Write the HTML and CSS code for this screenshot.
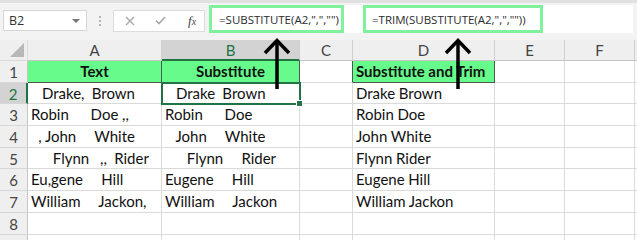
FILE: index.html
```html
<!DOCTYPE html>
<html lang="en">
<head>
    <meta charset="UTF-8">
    <meta name="viewport" content="width=device-width, initial-scale=1.0">
    <title>SUBSTITUTE and TRIM</title>
    <link rel="stylesheet" href="styles.css">
</head>
<body>
    <div class="toolbar">
        <div class="name-box">B2<span class="drop"></span></div>
        <div class="grip"><i></i><i></i><i></i></div>
        <div class="buttons">
            <svg width="10" height="10" viewBox="0 0 10 10"><path d="M1 1 L9 9 M9 1 L1 9" stroke="#a8a8a8" stroke-width="1.4" fill="none"/></svg>
            <svg width="11" height="9" viewBox="0 0 11 9"><path d="M1 4.5 L4 7.5 L10 1" stroke="#a8a8a8" stroke-width="1.6" fill="none"/></svg>
            <span class="fx">f<sub>x</sub></span>
        </div>
        <div class="formula">
            <span class="note">=SUBSTITUTE(A2,",","")</span>
            <span class="note wide">=TRIM(SUBSTITUTE(A2,",",""))</span>
        </div>
    </div>

    <div class="sheet">
        <div class="corner"></div>
        <div class="ch">A</div>
        <div class="ch active">B</div>
        <div class="ch">C</div>
        <div class="ch">D</div>
        <div class="ch">E</div>
        <div class="ch">F</div>
        <div class="ch"></div>

        <div class="rh">1</div>
        <div class="cell hl center">Text</div>
        <div class="cell hl center">Substitute</div>
        <div class="cell edge"></div>
        <div class="cell hl">Substitute and Trim</div>
        <div class="cell"></div>
        <div class="cell"></div>
        <div class="cell"></div>

        <div class="rh active">2</div>
        <div class="cell">   Drake,  Brown</div>
        <div class="cell selected">   Drake  Brown</div>
        <div class="cell"></div>
        <div class="cell">Drake Brown</div>
        <div class="cell"></div>
        <div class="cell"></div>
        <div class="cell"></div>

        <div class="rh">3</div>
        <div class="cell">Robin      Doe ,,</div>
        <div class="cell">Robin      Doe</div>
        <div class="cell"></div>
        <div class="cell">Robin Doe</div>
        <div class="cell"></div>
        <div class="cell"></div>
        <div class="cell"></div>

        <div class="rh">4</div>
        <div class="cell">  , John     White</div>
        <div class="cell">   John     White</div>
        <div class="cell"></div>
        <div class="cell">John White</div>
        <div class="cell"></div>
        <div class="cell"></div>
        <div class="cell"></div>

        <div class="rh">5</div>
        <div class="cell">      Flynn   ,,  Rider</div>
        <div class="cell">      Flynn     Rider</div>
        <div class="cell"></div>
        <div class="cell">Flynn Rider</div>
        <div class="cell"></div>
        <div class="cell"></div>
        <div class="cell"></div>

        <div class="rh">6</div>
        <div class="cell">Eu,gene     Hill</div>
        <div class="cell">Eugene     Hill</div>
        <div class="cell"></div>
        <div class="cell">Eugene Hill</div>
        <div class="cell"></div>
        <div class="cell"></div>
        <div class="cell"></div>

        <div class="rh">7</div>
        <div class="cell">William     Jackon,</div>
        <div class="cell">William     Jackon</div>
        <div class="cell"></div>
        <div class="cell">William Jackon</div>
        <div class="cell"></div>
        <div class="cell"></div>
        <div class="cell"></div>

        <div class="rh">8</div>
        <div class="cell"></div>
        <div class="cell"></div>
        <div class="cell"></div>
        <div class="cell"></div>
        <div class="cell"></div>
        <div class="cell"></div>
        <div class="cell"></div>

        <div class="rh"></div>
        <div class="cell"></div>
        <div class="cell"></div>
        <div class="cell"></div>
        <div class="cell"></div>
        <div class="cell"></div>
        <div class="cell"></div>
        <div class="cell"></div>
    </div>

    <!-- annotation arrows pointing at the formulas -->
    <svg class="arrows" width="637" height="240" viewBox="0 0 637 240">
        <g stroke="#000" stroke-width="3.5" fill="none">
            <path d="M277 40 V89"/>
            <path d="M265 53 L277 40.5 L289 53"/>
            <path d="M458 40 V89"/>
            <path d="M446 53 L458 40.5 L470 53"/>
        </g>
    </svg>
</body>
</html>
```

FILE: styles.css
```css
body {
    margin: 0;
    width: 637px;
    height: 240px;
    overflow: hidden;
    position: relative;
    background: #fff;
    font-family: Lato, "Liberation Sans", sans-serif;
}

.toolbar {
    height: 37px;
    border-top: 3px solid #e1e1e1;
    background: #f3f3f3;
    display: flex;
    align-items: center;
    padding-left: 3px;
    box-sizing: content-box;
}

.name-box {
    width: 84px;
    height: 21px;
    box-sizing: border-box;
    background: #fff;
    border: 1px solid #d6d6d6;
    display: flex;
    align-items: center;
    padding-left: 5px;
    font-family: "Open Sans", sans-serif;
    font-size: 12.5px;
    color: #333;
    margin-bottom: 2px;
}

.drop {
    margin-left: auto;
    margin-right: 6px;
    border-left: 4px solid transparent;
    border-right: 4px solid transparent;
    border-top: 4px solid #777;
}

.grip {
    width: 26px;
    display: flex;
    flex-direction: column;
    align-items: center;
    gap: 2px;
    margin-bottom: 2px;
}

.grip i {
    width: 2px;
    height: 2px;
    background: #b4b4b4;
}

.buttons {
    width: 92px;
    height: 22px;
    box-sizing: border-box;
    background: #fff;
    border: 1px solid #dcdcdc;
    display: flex;
    align-items: center;
    padding-left: 11px;
    gap: 20px;
    margin-bottom: 2px;
}

.fx {
    font-family: "Liberation Serif", serif;
    font-style: italic;
    font-size: 13px;
    color: #444;
    margin-left: 2px;
}

.fx sub {
    font-size: 10px;
    vertical-align: 0;
}

.formula {
    margin-left: 4px;
    height: 28px;
    width: 424px;
    background: #fff;
    display: flex;
    gap: 19px;
    margin-bottom: 5px;
}

.note {
    width: 135px;
    box-sizing: border-box;
    border: 3px solid #80f29d;
    display: flex;
    align-items: center;
    padding-left: 7px;
    font-family: "Open Sans", sans-serif;
    font-size: 11.5px;
    color: #2b2b2b;
    white-space: pre;
}

.note.wide {
    width: 180px;
    padding-left: 6px;
}

.sheet {
    display: grid;
    grid-template-columns: 28px 134px 138px 53px 142px 70px 70px 1fr;
    grid-template-rows: 21px;
    grid-auto-rows: 21.7px;
    font-size: 15px;
    color: #111;
}

.sheet > div {
    box-sizing: border-box;
    border-right: 1px solid #dadada;
    border-bottom: 1px solid #dadada;
    white-space: pre;
    word-spacing: -0.2px;
}

.corner {
    background: #efefef;
    position: relative;
}

.corner::after {
    content: "";
    position: absolute;
    right: 3px;
    bottom: 3px;
    border-left: 14px solid transparent;
    border-bottom: 14px solid #b8b8b8;
}

.ch {
    background: #efefef;
    color: #444;
    text-align: center;
    line-height: 20px;
    border-right-color: #d0d0d0 !important;
    border-bottom-color: #c6c6c6 !important;
}

.ch.active {
    background: #d3d3d3;
    color: #217346;
    border-bottom: 2px solid #217346 !important;
}

.rh {
    background: #efefef;
    color: #444;
    text-align: center;
    line-height: 22px;
    border-right-color: #c6c6c6 !important;
    border-bottom-color: #d6d6d6 !important;
}

.rh.active {
    background: #d3d3d3;
    color: #217346;
    border-right: 2px solid #217346 !important;
}

.cell {
    padding-left: 3px;
    line-height: 21px;
}

.hl {
    background: #66fb8a;
    font-weight: bold;
    word-spacing: 0;
    border-right-color: #4b5a4f !important;
    border-bottom-color: #4b5a4f !important;
}

.edge {
    border-right-color: #4b5a4f !important;
}

.center {
    text-align: center;
    padding-left: 0;
}

.selected {
    position: relative;
    outline: 2px solid #217346;
    outline-offset: -1px;
}

.selected::after {
    content: "";
    position: absolute;
    right: -4px;
    bottom: -4px;
    width: 5px;
    height: 5px;
    background: #217346;
    border: 1px solid #fff;
}

.arrows {
    position: absolute;
    left: 0;
    top: 0;
    pointer-events: none;
}
```
